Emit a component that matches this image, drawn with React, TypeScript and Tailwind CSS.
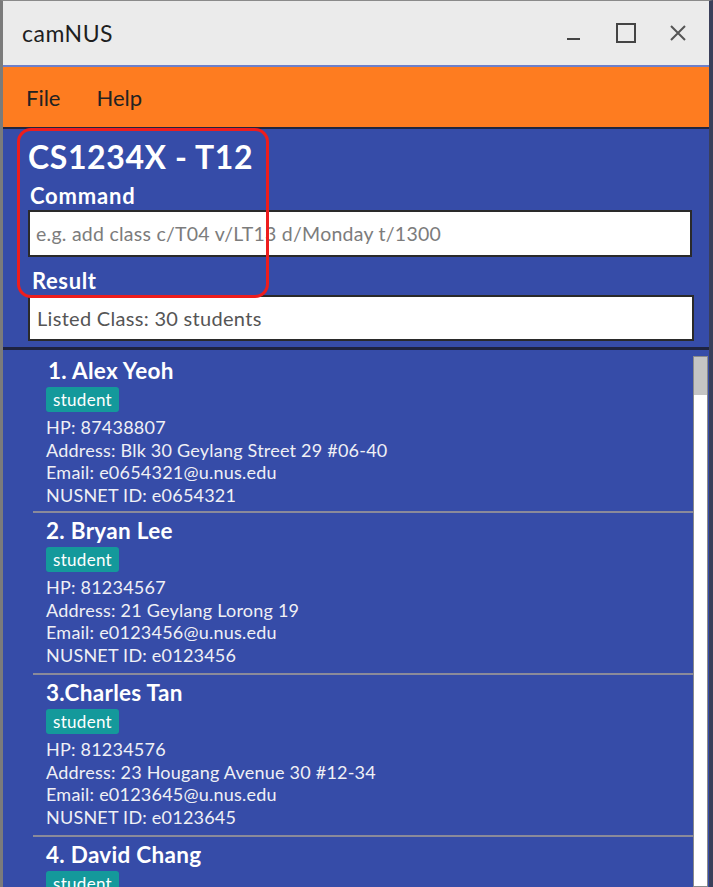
import React from 'react'

type Student = {
  name: string
  hp: string
  address: string
  email: string
  nusnet: string
}

const students: Student[] = [
  { name: '1. Alex Yeoh', hp: '87438807', address: 'Blk 30 Geylang Street 29 #06-40', email: 'e0654321@u.nus.edu', nusnet: 'e0654321' },
  { name: '2. Bryan Lee', hp: '81234567', address: '21 Geylang Lorong 19', email: 'e0123456@u.nus.edu', nusnet: 'e0123456' },
  { name: '3.Charles Tan', hp: '81234576', address: '23 Hougang Avenue 30 #12-34', email: 'e0123645@u.nus.edu', nusnet: 'e0123645' },
  { name: '4. David Chang', hp: '81234765', address: '10 Tampines Street 11 #03-02', email: 'e0132456@u.nus.edu', nusnet: 'e0132456' },
]

function StudentCard({ s, first }: { s: Student; first: boolean }) {
  return (
    <div className={`ml-[30px] mr-[16px] border-b-2 border-[#8a8a9a] pl-[13px] ${first ? 'pt-[7px] pb-[5px]' : 'pt-[4px] pb-[7px]'}`}>
      <div className={`text-[22.5px] leading-[28px] font-bold tracking-[0.3px] text-white ${first ? 'pl-[2px]' : ''}`}>{s.name}</div>
      <div className="mt-[2px] inline-flex h-[25px] items-center rounded-[3px] bg-[#14999b] px-[7px] text-[17px] tracking-[0.3px] text-white">
        student
      </div>
      <div className="mt-[4px] text-[18px] leading-[22.5px] tracking-[0.22px] text-[#f0f0f5]">
        <div>HP: {s.hp}</div>
        <div>Address: {s.address}</div>
        <div>Email: {s.email}</div>
        <div>NUSNET ID: {s.nusnet}</div>
      </div>
    </div>
  )
}

export default function App() {
  return (
    <div
      className="relative flex h-[887px] w-[713px] flex-col overflow-hidden border-l-[3px] border-t border-r-[4px] border-l-[#7b7b7b] border-t-[#8a8a8a] border-r-[#3a3f5a] bg-[#364ca8]"
      style={{ fontFamily: 'Lato, "Noto Sans", sans-serif' }}
    >
      {/* title bar */}
      <div className="flex h-[64px] shrink-0 items-center bg-[#ebebeb] pl-[19px] pr-[22px] text-[#1e1e1e]">
        <span className="text-[23px] tracking-[0.5px]">camNUS</span>
        <div className="ml-auto flex items-center gap-[33px]">
          <svg width="18" height="20" viewBox="0 0 18 20">
            <line x1="2" y1="16" x2="15" y2="16" stroke="#444" strokeWidth="2" />
          </svg>
          <svg width="20" height="20" viewBox="0 0 20 20">
            <rect x="1" y="1" width="18" height="18" fill="none" stroke="#444" strokeWidth="2" />
          </svg>
          <svg width="18" height="18" viewBox="0 0 18 18">
            <path d="M2 2 L16 16 M16 2 L2 16" stroke="#555" strokeWidth="2" />
          </svg>
        </div>
      </div>
      <div className="h-[2px] shrink-0 bg-[#6d7fc9]" />

      {/* menu bar */}
      <div className="flex h-[60px] shrink-0 items-center gap-[36px] bg-[#fe7c20] pl-[23px] text-[22px] text-[#222]">
        <span>File</span>
        <span>Help</span>
      </div>
      <div className="h-[2px] shrink-0 bg-[#20253f]" />

      {/* command panel */}
      <div className="shrink-0 pl-[25px] pr-[15px] pt-[10px] pb-[6px]">
        <div className="text-[32px] leading-[36px] font-bold tracking-[0.6px] text-white">CS1234X - T12</div>
        <div className="mt-[8px] pl-[2px] text-[22px] leading-[26px] font-bold tracking-[0.8px] text-white">Command</div>
        <div className="mt-[1px] mr-[2px] flex h-[47px] items-center border-2 border-[#2a2a2a] bg-white pl-[6px] text-[19.5px] tracking-[0.25px] text-[#7c7c7c]">
          e.g. add class c/T04 v/LT13 d/Monday t/1300
        </div>
        <div className="mt-[11px] pl-[4px] text-[22px] leading-[26px] font-bold tracking-[0.6px] text-white">Result</div>
        <div className="mt-[1px] flex h-[46px] items-center border-2 border-[#2a2a2a] bg-white pl-[7px] text-[20px] tracking-[0.3px] text-[#555]">
          Listed Class: 30 students
        </div>
      </div>
      <div className="h-[3px] shrink-0 bg-[#1e2340]" />

      {/* list */}
      <div className="relative flex-1 overflow-hidden">
        <div>
          {students.map((s, i) => (
            <StudentCard key={s.name} s={s} first={i === 0} />
          ))}
        </div>
        <div className="absolute right-[1px] top-[6px] bottom-0 w-[15px] border border-[#8a8a8a] bg-white">
          <div className="h-[38px] bg-[#c4c4c4]" />
        </div>
      </div>

      {/* highlight overlay */}
      <div className="pointer-events-none absolute left-[14px] top-[127px] h-[170px] w-[252px] rounded-[14px] border-[3px] border-[#ee1d1d]" />
    </div>
  )
}
